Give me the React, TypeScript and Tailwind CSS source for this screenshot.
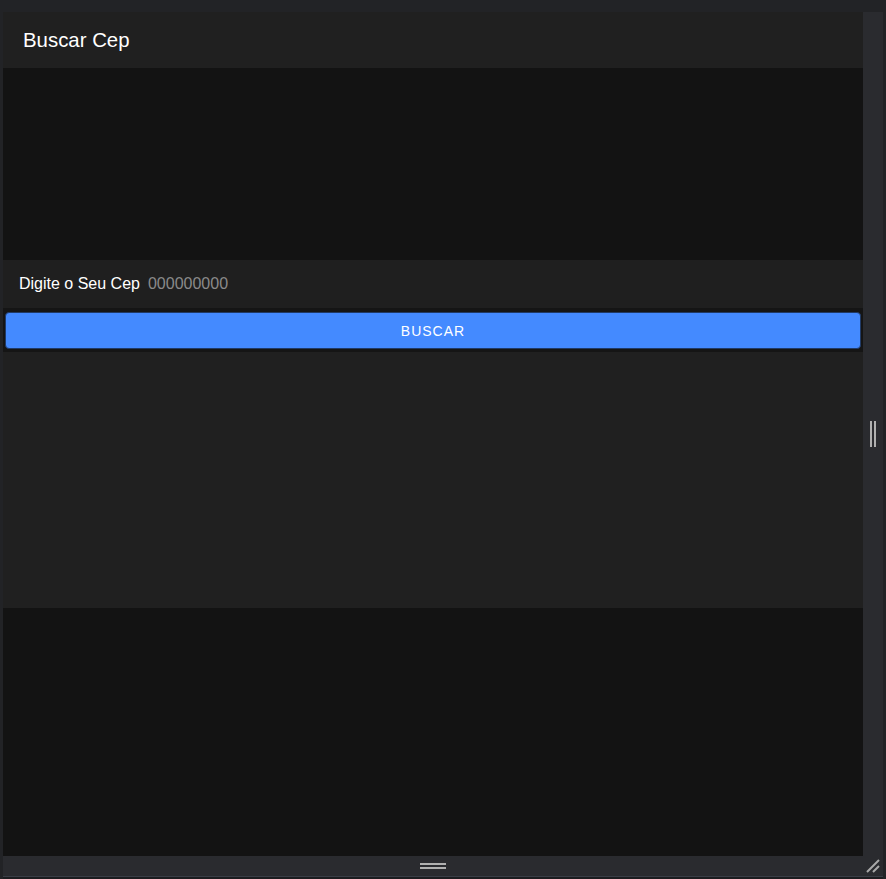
import React, { useState } from "react";

export default function App() {
  const [cep, setCep] = useState("");

  return (
    <div className="flex h-[879px] w-[886px] flex-col bg-[#222326] px-[3px] pt-[12px] font-['Liberation_Sans',Arial,sans-serif]">
      <div className="grid grid-cols-[860px_20px] grid-rows-[844px_20px]">
        {/* panel */}
        <div className="flex flex-col overflow-hidden bg-[#131313]">
          <div className="flex h-[56px] items-center bg-[#202020] pl-5 text-[20.4px] text-white">
            Buscar Cep
          </div>
          <div className="h-[192px] bg-[#131313]" />
          <div className="flex h-[48px] items-center gap-2 bg-[#1f1f1f] pl-4 text-[16px]">
            <label className="text-white">Digite o Seu Cep</label>
            <input
              value={cep}
              onChange={(e) => setCep(e.target.value)}
              placeholder="000000000"
              className="w-[200px] bg-transparent text-[16px] text-white outline-none placeholder:text-[#8a8a8a]"
            />
          </div>
          <div className="flex h-[44px] items-center bg-[#151515] px-[2px]">
            <button className="h-[37px] w-full rounded-[4px] border border-[#203a66] bg-[#448aff] pt-[2px] text-[14px] tracking-[1px] text-white">
              BUSCAR
            </button>
          </div>
          <div className="h-[256px] bg-[#202020]" />
          <div className="flex-1 bg-[#131313]" />
        </div>

        {/* right resize bar */}
        <div className="flex items-center justify-center gap-[2px] bg-[#2a2b2f]">
          <div className="h-[26px] w-[2px] bg-[#b0b0b0]" />
          <div className="h-[26px] w-[2px] bg-[#b0b0b0]" />
        </div>

        {/* bottom resize bar */}
        <div className="flex flex-col items-center justify-center gap-[2px] bg-[#2a2b2f]">
          <div className="h-[2px] w-[26px] bg-[#b0b0b0]" />
          <div className="h-[2px] w-[26px] bg-[#b0b0b0]" />
        </div>

        {/* corner grip */}
        <div className="flex items-end justify-center bg-[#2a2b2f] pb-[3px]">
          <svg width="14" height="14" viewBox="0 0 14 14">
            <path d="M1 13 L13 1 M7 13 L13 7" stroke="#a8a8a8" strokeWidth="2" />
          </svg>
        </div>
      </div>
      <div className="h-px bg-[#3a3e46]" />
      <div className="flex-1 bg-[#1c1d20]" />
    </div>
  );
}
